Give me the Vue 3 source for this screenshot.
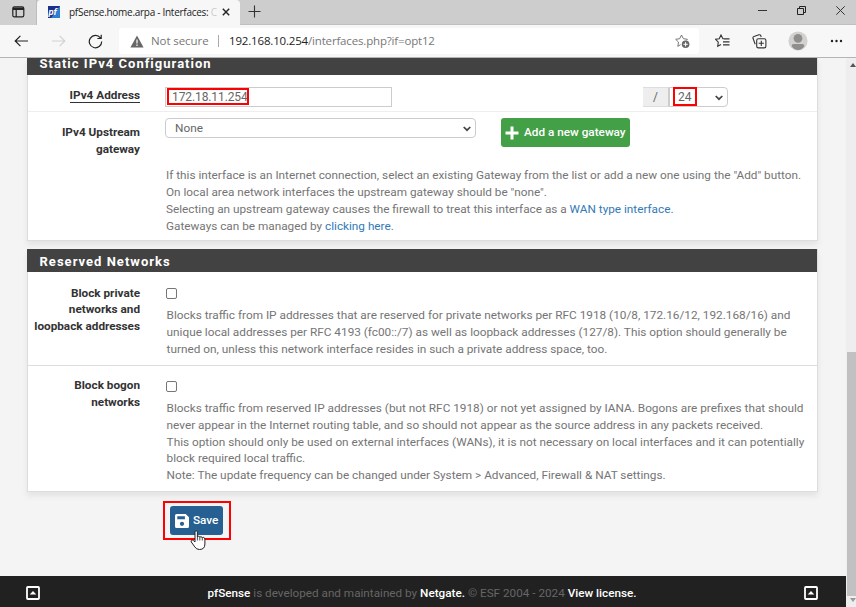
<script setup>
const gatewayHelp = [
  [{ t: 'If this interface is an Internet connection, select an existing Gateway from the list or add a new one using the "Add" button.' }],
  [{ t: 'On local area network interfaces the upstream gateway should be "none".' }],
  [{ t: 'Selecting an upstream gateway causes the firewall to treat this interface as a ' }, { t: 'WAN type interface', link: true }, { t: '.', link: true }],
  [{ t: 'Gateways can be managed by ' }, { t: 'clicking here', link: true }, { t: '.' }],
]
const reserved = [
  {
    key: 'private',
    label: ['Block private', 'networks and', 'loopback addresses'],
    help: [
      'Blocks traffic from IP addresses that are reserved for private networks per RFC 1918 (10/8, 172.16/12, 192.168/16) and',
      'unique local addresses per RFC 4193 (fc00::/7) as well as loopback addresses (127/8). This option should generally be',
      'turned on, unless this network interface resides in such a private address space, too.',
    ],
  },
  {
    key: 'bogon',
    label: ['Block bogon', 'networks'],
    help: [
      'Blocks traffic from reserved IP addresses (but not RFC 1918) or not yet assigned by IANA. Bogons are prefixes that should',
      'never appear in the Internet routing table, and so should not appear as the source address in any packets received.',
      'This option should only be used on external interfaces (WANs), it is not necessary on local interfaces and it can potentially',
      'block required local traffic.',
      'Note: The update frequency can be changed under System > Advanced, Firewall & NAT settings.',
    ],
  },
]
</script>

<template>
  <div class="browser">
    <div class="tabbar">
      <div class="tab-actions">
        <svg width="13" height="12" viewBox="0 0 13 12" fill="none" stroke="#222" stroke-width="1.2"><rect x=".8" y=".8" width="11" height="10" rx="1.6" /><path d="M1 2.2h11M1 3.4h11M4.2 3v8" /></svg>
      </div>
      <div class="tab">
        <svg class="favicon" width="12" height="12" viewBox="0 0 12 12"><path fill="#1c2f8c" d="M0 0h12v12H0z" /><path fill="#2d7fd0" d="M12 0v12H3z" /><text x=".4" y="8.8" font-family="Roboto, sans-serif" font-size="9.5" font-weight="700" font-style="italic" fill="#fff">pf</text></svg>
        <span class="tab-title">pfSense.home.arpa - Interfaces: <i>C</i></span>
        <svg class="tab-close" width="8" height="8" viewBox="0 0 8 8" stroke="#222" stroke-width="1.4"><path d="M.8.8l6.4 6.4M7.2.8L.8 7.2" /></svg>
      </div>
      <svg class="new-tab" width="13" height="13" viewBox="0 0 13 13" stroke="#333" stroke-width="1.1"><path d="M6.5.5v12M.5 6.5h12" /></svg>
      <div class="window-buttons">
        <svg width="9" height="9" viewBox="0 0 9 9" stroke="#333"><path d="M0 4.5h9" /></svg>
        <svg width="9" height="9" viewBox="0 0 9 9" fill="none" stroke="#222"><path d="M.5 2.5h6v6h-6zM2.5 2.5v-2h6v6h-2" /></svg>
        <svg width="9" height="9" viewBox="0 0 9 9" stroke="#333" stroke-width="1"><path d="M.3.3l8.4 8.4M8.7.3L.3 8.7" /></svg>
      </div>
    </div>
    <div class="toolbar">
      <svg class="back" width="15" height="12" viewBox="0 0 15 12" fill="none" stroke="#222" stroke-width="1.2"><path d="M14 6H1.2M6.4 .8L1.2 6l5.2 5.2" /></svg>
      <svg class="forward" width="15" height="12" viewBox="0 0 15 12" fill="none" stroke="#d2d2d2" stroke-width="1.2"><path d="M1 6h12.8M8.6 .8L13.8 6l-5.2 5.2" /></svg>
      <svg class="reload" width="15" height="15" viewBox="0 0 15 15" fill="none" stroke="#222" stroke-width="1.2"><path d="M13.7 7.6A6.2 6.2 0 1 1 12.4 3.8M13.2 .8v3.7H9.4" /></svg>
      <div class="address">
        <svg class="warning" width="14" height="13" viewBox="0 0 14 13"><path fill="#666" d="M7 .5L13.6 12.5H.4z" /><path stroke="#fff" stroke-width="1.2" d="M7 4.5v4M7 9.6v1.3" /></svg>
        <span class="not-secure">Not secure</span>
        <span class="divider"></span>
        <span class="url"><b>192.168.10.254</b>/interfaces.php?if=opt12</span>
        <svg class="fav-add" width="15" height="15" viewBox="0 0 15 15" fill="none" stroke="#777" stroke-width="1"><path d="M5.6 10.6L2.8 12.4l.7-4.3L.7 5.3l4-.6L6.5 1l1.9 3.7 4 .6-1.1 1.2" /><circle cx="10.6" cy="10.3" r="3.8" fill="#666" stroke="none" /><path stroke="#fff" d="M10.6 8.1v4.4M8.4 10.3h4.4" /></svg>
      </div>
      <svg class="favorites" width="15" height="14" viewBox="0 0 15 14" fill="none" stroke="#333" stroke-width="1.1"><path d="M9 4.8L7.9 4.7 6 1 4.2 4.7l-3.6.6 2.7 2.8-.6 4.1L6 10.4M9 4.9h5.5M8 7.9h6.5M8 10.9h6.5" /></svg>
      <svg class="collections" width="15" height="15" viewBox="0 0 15 15" fill="none" stroke="#333" stroke-width="1.1"><rect x="4.7" y="4.7" width="9.2" height="9.2" rx="1.7" /><path d="M9.3 6.7v5.2M6.7 9.3h5.2M3.2 10.3L1 4.3Q.6 2.9 2 2.4L7 .8q1.3-.4 1.8.9l.4 1.3" /></svg>
      <svg class="avatar" width="20" height="20" viewBox="0 0 20 20"><circle cx="10" cy="10" r="9.6" fill="#d3d1cf" /><circle cx="10" cy="7.3" r="4.4" fill="#908e8c" /><path fill="#908e8c" d="M3.6 15.2q0-2.1 2.2-2.1h8.4q2.2 0 2.2 2.1-2.3 3.7-6.4 3.7t-6.4-3.7z" /></svg>
      <svg class="more" width="13" height="4" viewBox="0 0 13 4" fill="#222"><circle cx="2" cy="2" r="1.2" /><circle cx="6.5" cy="2" r="1.2" /><circle cx="11" cy="2" r="1.2" /></svg>
    </div>

    <div class="viewport">
      <main class="page">
        <section class="panel first">
          <h2>Static IPv4 Configuration</h2>
          <div class="row address-row">
            <label class="name"><span class="required">IPv4 Address</span></label>
            <div class="ip-box">172.18.11.254<span class="mark mark-ip"></span></div>
            <div class="mask"><span class="slash">/</span><span class="mask-box">24<svg class="chevron" width="8" height="6" viewBox="0 0 8 6" fill="none" stroke="#444" stroke-width="1.7"><path d="M.7 1L4 4.2 7.3 1" /></svg><span class="mark mark-mask"></span></span></div>
          </div>
          <div class="row gateway-row">
            <label class="name">IPv4 Upstream<br>gateway</label>
            <div class="content">
              <div class="gateway-controls">
                <div class="select">None<svg class="chevron" width="8" height="6" viewBox="0 0 8 6" fill="none" stroke="#444" stroke-width="1.7"><path d="M.7 1L4 4.2 7.3 1" /></svg></div>
                <button class="add"><svg width="14" height="14" viewBox="0 0 14 14" stroke="#fff" stroke-width="3"><path d="M7 .5v13M.5 7h13" /></svg><span>Add a new gateway</span></button>
              </div>
              <div class="help">
                <div v-for="(line, i) in gatewayHelp" :key="i"><span v-for="(part, j) in line" :key="j" :class="{ link: part.link }">{{ part.t }}</span></div>
              </div>
            </div>
          </div>
        </section>

        <section class="panel">
          <h2>Reserved Networks</h2>
          <div v-for="item in reserved" :key="item.key" class="row reserved-row" :class="item.key">
            <label class="name"><span v-for="l in item.label" :key="l">{{ l }}</span></label>
            <div class="content">
              <span class="checkbox"></span>
              <div class="help"><div v-for="l in item.help" :key="l">{{ l }}</div></div>
            </div>
          </div>
        </section>

        <div class="actions">
          <button class="save"><svg width="14" height="14" viewBox="0 0 14 14"><path fill="#fff" fill-rule="evenodd" d="M1.6 0h9.1L14 3.3v9.1q0 1.6-1.6 1.6H1.6Q0 14 0 12.400V1.6Q0 0 1.600 0zM2.300 2.300v3h7.600v-3zM7 7.700a2.100 2.100 0 1 0 0 4.200 2.100 2.100 0 0 0 0-4.200z" /></svg><span>Save</span></button>
          <span class="mark mark-save"></span>
          <svg class="cursor" width="16" height="21" viewBox="0 0 16 21"><path fill="#fff" stroke="#222" stroke-width="1" stroke-linejoin="round" d="M5 12V2.200Q5 .8 6.200.8t1.200 1.400V7q.2-.8 1.200-.8t1.200 1.200q.2-.7 1.200-.7t1.300 1.300q.3-.6 1.200-.6T14.900 9v5q0 5.500-5.500 5.500-3 0-4.600-2.600L1.300 12q-.7-1.400.4-1.800t1.900.5z" /><path stroke="#222" stroke-width=".8" d="M7.400 7v3.500M9.800 7.500v3M12.300 8v2.500" /></svg>
        </div>

        <footer>
          <svg width="14" height="14" viewBox="0 0 14 14"><rect x="1" y="1" width="12" height="12" rx=".8" fill="none" stroke="#fff" stroke-width="1.800" /><path fill="#fff" d="M3.700 8.500L7 5l3.300 3.500z" /></svg>
          <p><b>pfSense</b> is developed and maintained by <b>Netgate.</b> © ESF 2004 - 2024 <b>View license.</b></p>
          <svg width="14" height="14" viewBox="0 0 14 14"><rect x="1" y="1" width="12" height="12" rx=".8" fill="none" stroke="#fff" stroke-width="1.800" /><path fill="#fff" d="M3.700 8.500L7 5l3.300 3.500z" /></svg>
        </footer>
      </main>
      <div class="scrollbar">
        <svg width="6" height="4" viewBox="0 0 6 4"><path fill="#555" d="M0 4l3-4 3 4z" /></svg>
        <div class="thumb"></div>
        <svg width="6" height="4" viewBox="0 0 6 4"><path fill="#999" d="M0 0l3 4 3-4z" /></svg>
      </div>
    </div>
  </div>
</template>

<style>
body { margin: 0; overflow: hidden; }
</style>
<style scoped>
* { box-sizing: border-box; }
svg { display: block; flex: none; }
.browser { width: 856px; height: 607px; display: flex; flex-direction: column; background: #f4f4f4; font-family: Roboto, sans-serif; overflow: hidden; }
.tabbar { height: 25px; flex: none; display: flex; background: #cdcdcd; border-bottom: 1px solid #c0c0c0; }
.tab-actions { width: 37px; height: 25px; padding: 6px 0 0 12px; background: #d0d0d0; border-right: 1px solid #bdbdbd; }
.tab { width: 203px; height: 25px; display: flex; align-items: center; padding: 0 10px 1px 11px; background: #f7f7f7; border-radius: 4px 4px 0 0; }
.tab-title { width: 148px; margin-left: 9px; white-space: nowrap; font: 10px/16px "Open Sans", sans-serif; letter-spacing: -.28px; color: #222; }
.tab-title i { font-style: normal; color: #ccc; }
.tab-close { margin-left: 5px; }
.new-tab { margin: 5px 0 0 8px; }
.window-buttons { margin-left: auto; display: flex; gap: 30px; padding: 6px 11px 0 0; }
.toolbar { height: 33px; flex: none; display: flex; align-items: center; background: #f7f7f7; border-bottom: 1px solid #b5b5b5; }
.back { margin-left: 14px; }
.forward { margin-left: 22px; }
.reload { margin-left: 22px; }
.address { width: 580px; height: 26px; margin-left: 16px; display: flex; align-items: center; background: #fff; border-radius: 3px; font: 11.5px/18px "Open Sans", sans-serif; color: #777; white-space: nowrap; }
.warning { margin-left: 11px; }
.not-secure { width: 58px; margin-left: 7px; letter-spacing: -.08px; }
.divider { width: 1px; height: 12px; margin-left: 9px; background: #aaa; }
.url { margin-left: 10px; letter-spacing: -.17px; }
.url b { font-weight: 400; color: #222; }
.fav-add { margin: 1px 9px 0 auto; }
.favorites { margin-left: 16px; }
.collections { margin-left: 22px; }
.avatar { margin-left: 21px; }
.more { margin-left: 22px; }

.viewport { flex: 1; min-height: 0; display: flex; }
.page { width: 846px; display: flex; flex-direction: column; }
.scrollbar { width: 10px; display: flex; flex-direction: column; align-items: center; background: #eee; padding: 5px 0 5px 3px; justify-content: space-between; }
.thumb { width: 10px; height: 244px; margin: 282px 0 0 -1px; background: #c1c1c1; }
.panel { width: 791px; flex: none; margin: 0 0 9px 27px; background: #fff; border: 1px solid #ddd; border-top: 0; box-shadow: 0 4px 6px rgba(0, 0, 0, .07); }
.panel.first { margin-bottom: 8px; }
h2 { height: 23px; margin: 0 0 0 -1px; padding-left: 12.5px; background: #424242; color: #fff; font-size: 13px; line-height: 25px; font-weight: 700; letter-spacing: 1.02px; }
.first h2 { height: 17px; line-height: 11px; }
.row { display: flex; }
.name { width: 112px; display: flex; flex-direction: column; flex: none; text-align: right; font-size: 11.75px; line-height: 16.8px; font-weight: 700; color: #333; white-space: nowrap; }
.name span { display: block; }
.required { align-self: flex-end; line-height: 14px; border-bottom: 1px solid #333; }
.address-row { height: 37px; border-bottom: 1px solid #eee; }
.address-row .name { padding-top: 13px; }
.ip-box { position: relative; width: 227px; height: 20px; margin: 12px 0 0 25px; padding-left: 6px; border: 1px solid #ccc; font-size: 12px; line-height: 19px; color: #666; letter-spacing: -.1px; }
.mark { position: absolute; border: 2px solid #f00; }
.mark-ip { left: 1px; top: 0; width: 82px; height: 17px; }
.mask { display: flex; margin: 12px 0 0 251px; font-size: 12px; color: #666; line-height: 19px; }
.slash { width: 26px; height: 20px; text-align: center; background: #eee; border: 1px solid #ddd; border-left: 0; border-right-color: #ccc; }
.mask-box { position: relative; width: 59px; height: 20px; padding-left: 8px; border: 1px solid #ccc; border-radius: 0 4px 4px 0; }
.chevron { position: absolute; right: 4px; top: 7px; }
.mark-mask { left: 3px; top: -1px; width: 24px; height: 19px; }
.gateway-row { height: 128px; }
.gateway-row .name { display: block; padding-top: 12px; }
.content { margin-left: 26px; }
.gateway-controls { display: flex; margin: 6px 0 0 -1px; gap: 25px; }
.select { position: relative; width: 311px; height: 20px; padding-left: 9px; border: 1px solid #ccc; border-radius: 4px; font-size: 11.8px; line-height: 19px; color: #666; }
.add, .save { display: flex; align-items: center; border: 0; border-radius: 3px; color: #fff; font: 500 11.75px Roboto, sans-serif; }
.add span, .save span { padding-bottom: 2px; }
.add { width: 129px; height: 29px; gap: 5px; padding: 0 4px; background: #43a047; white-space: nowrap; }
.help { font-size: 11.78px; line-height: 16.8px; color: #757575; white-space: nowrap; }
.gateway-row .help { margin: 20px 0 0 0; line-height: 17px; }
.reserved-row .help { padding-left: .6px; font-size: 11.8px; }
.link { color: #337ab7; }
.reserved-row .name { padding-top: 12.6px; }
.reserved-row.bogon .name { padding-top: 12px; }
.reserved-row.private { height: 94px; border-bottom: 1px solid #ddd; }
.reserved-row.bogon { height: 125px; }
.checkbox { display: block; width: 11px; height: 11px; margin: 16px 0 8px; border: 1px solid #767676; border-radius: 2px; }
.bogon .checkbox { margin-top: 15px; }
.bogon .name { margin-top: -1px; }
.actions { position: relative; padding: 5px 0 0 170px; flex: 1; }
.save { width: 53px; height: 29px; padding: 0 5px; gap: 4px; background: #265f91; }
.mark-save { left: 163px; top: 0; width: 68px; height: 39px; }
.cursor { position: absolute; left: 190px; top: 29px; }
footer { height: 31px; flex: none; display: flex; justify-content: space-between; align-items: center; padding: 2px 28px 0 26px; background: #212121; color: #666; font-size: 11.73px; }
footer p { margin: 0; }
footer b { color: #fff; font-weight: 500; }
</style>
